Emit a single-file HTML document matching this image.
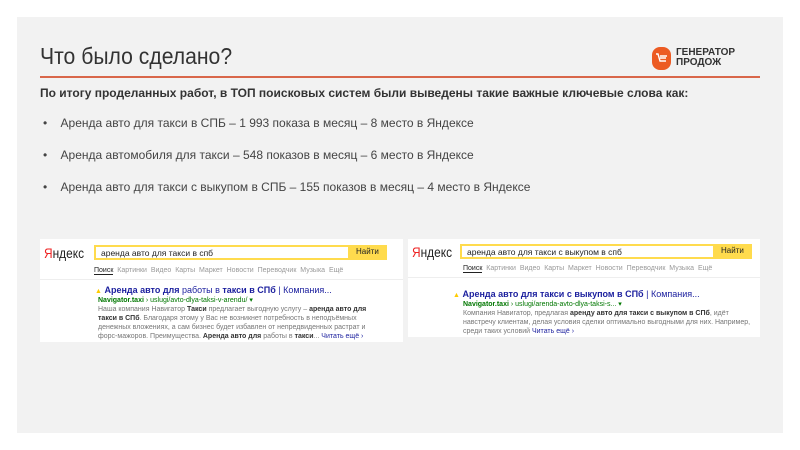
<!DOCTYPE html><html><head><meta charset="utf-8"><style>
*{margin:0;padding:0;box-sizing:border-box}
body{width:800px;height:450px;background:#fff;font-family:"Liberation Sans",Arial,sans-serif;position:relative;overflow:hidden}
.bg{position:absolute;left:17px;top:17px;width:766px;height:416px;background:#f2f2f2}
.a{position:absolute;white-space:nowrap}
.shot{position:absolute;background:#fff;font-size:7px;color:#999}
.logoY{font-size:14px;color:#222;transform:scaleX(.85);transform-origin:left}
.logoY b{color:#e22;font-weight:normal}
.sb{position:absolute;height:15px;border:2px solid #ffdb4d;background:#fff;font-size:8.5px;color:#222;padding:1px 5px}
.btn{position:absolute;height:15px;background:#ffdb4d;font-size:8px;color:#222;padding:2px 8px}
.t{color:#1b1f9e;font-size:9px}
.g{color:#070;font-size:7px}
</style></head><body>
<div class="bg"></div>
<div class="a" style="left:40px;top:43px;font-size:23px;color:#333;transform:scaleX(.92);transform-origin:left">Что было сделано?</div>
<div style="position:absolute;left:40px;top:76px;width:720px;height:2px;background:#d9674a"></div>
<div style="position:absolute;left:652px;top:47px;width:19px;height:23px;border-radius:8px;background:#ec5b23"></div>
<svg style="position:absolute;left:655px;top:52px" width="13" height="13" viewBox="0 0 13 13"><path d="M1 2h2l2 7h6M5 4h7M5 6h6" stroke="#fff" stroke-width="1.4" fill="none"/></svg>
<div class="a" style="left:676px;top:48px;font-size:10px;font-weight:bold;color:#333;line-height:10px">ГЕНЕРАТОР<br>ПРОДОЖ</div>
<div class="a" style="left:40px;top:86px;font-size:12px;font-weight:bold;color:#333">По итогу проделанных работ, в ТОП поисковых систем были выведены такие важные ключевые слова как:</div>
<div class="a" style="left:43px;top:116px;font-size:12px;color:#444">•&nbsp;&nbsp;&nbsp;&nbsp;Аренда авто для такси в СПБ – 1 993 показа в месяц – 8 место в Яндексе</div>
<div class="a" style="left:43px;top:148px;font-size:12px;color:#444">•&nbsp;&nbsp;&nbsp;&nbsp;Аренда автомобиля для такси – 548 показов в месяц – 6 место в Яндексе</div>
<div class="a" style="left:43px;top:180px;font-size:12px;color:#444">•&nbsp;&nbsp;&nbsp;&nbsp;Аренда авто для такси с выкупом в СПБ – 155 показов в месяц – 4 место в Яндексе</div>

<div class="shot" style="left:40px;top:239px;width:363px;height:103px">
<div class="a logoY" style="left:4px;top:6px"><b>Я</b>ндекс</div>
<div class="sb" style="left:54px;top:6px;width:256px">аренда авто для такси в спб</div>
<div class="btn" style="left:308px;top:6px">Найти</div>
<div class="a" style="left:54px;top:28px"><span style="color:#222;border-bottom:1px solid #222">Поиск</span>&nbsp;&nbsp;Картинки&nbsp;&nbsp;Видео&nbsp;&nbsp;Карты&nbsp;&nbsp;Маркет&nbsp;&nbsp;Новости&nbsp;&nbsp;Переводчик&nbsp;&nbsp;Музыка&nbsp;&nbsp;Ещё</div>
<div style="position:absolute;left:0;top:40px;width:363px;height:1px;background:#eee"></div>
<div class="a t" style="left:55px;top:46px"><span style="color:#fc0;font-size:7px">▲</span> <b>Аренда авто для</b> работы в <b>такси в СПб</b> | Компания...</div>
<div class="a g" style="left:58px;top:57px"><b>Navigator.taxi</b> › uslugi/avto-dlya-taksi-v-arendu/ ▾</div>
<div class="a" style="left:58px;top:66px;line-height:9px;color:#777">Наша компания Навигатор <b style="color:#333">Такси</b> предлагает выгодную услугу – <b style="color:#333">аренда авто для</b><br><b style="color:#333">такси в СПб</b>. Благодаря этому у Вас не возникнет потребность в неподъёмных<br>денежных вложениях, а сам бизнес будет избавлен от непредвиденных растрат и<br>форс-мажоров. Преимущества. <b style="color:#333">Аренда авто для</b> работы в <b style="color:#333">такси</b>... <span style="color:#1b1f9e">Читать ещё ›</span></div>
</div>

<div class="shot" style="left:408px;top:239px;width:352px;height:98px">
<div class="a logoY" style="left:4px;top:5px"><b>Я</b>ндекс</div>
<div class="sb" style="left:52px;top:5px;width:255px">аренда авто для такси с выкупом в спб</div>
<div class="btn" style="left:305px;top:5px">Найти</div>
<div class="a" style="left:55px;top:26px"><span style="color:#222;border-bottom:1px solid #222">Поиск</span>&nbsp;&nbsp;Картинки&nbsp;&nbsp;Видео&nbsp;&nbsp;Карты&nbsp;&nbsp;Маркет&nbsp;&nbsp;Новости&nbsp;&nbsp;Переводчик&nbsp;&nbsp;Музыка&nbsp;&nbsp;Ещё</div>
<div style="position:absolute;left:0;top:38px;width:352px;height:1px;background:#eee"></div>
<div class="a t" style="left:45px;top:50px"><span style="color:#fc0;font-size:7px">▲</span> <b>Аренда авто для такси с выкупом в СПб</b> | Компания...</div>
<div class="a g" style="left:55px;top:61px"><b>Navigator.taxi</b> › uslugi/arenda-avto-dlya-taksi-s... ▾</div>
<div class="a" style="left:55px;top:70px;line-height:9px;color:#777">Компания Навигатор, предлагая <b style="color:#333">аренду авто для такси с выкупом в СПб</b>, идёт<br>навстречу клиентам, делая условия сделки оптимально выгодными для них. Например,<br>среди таких условий <span style="color:#1b1f9e">Читать ещё ›</span></div>
</div>
</body></html>
